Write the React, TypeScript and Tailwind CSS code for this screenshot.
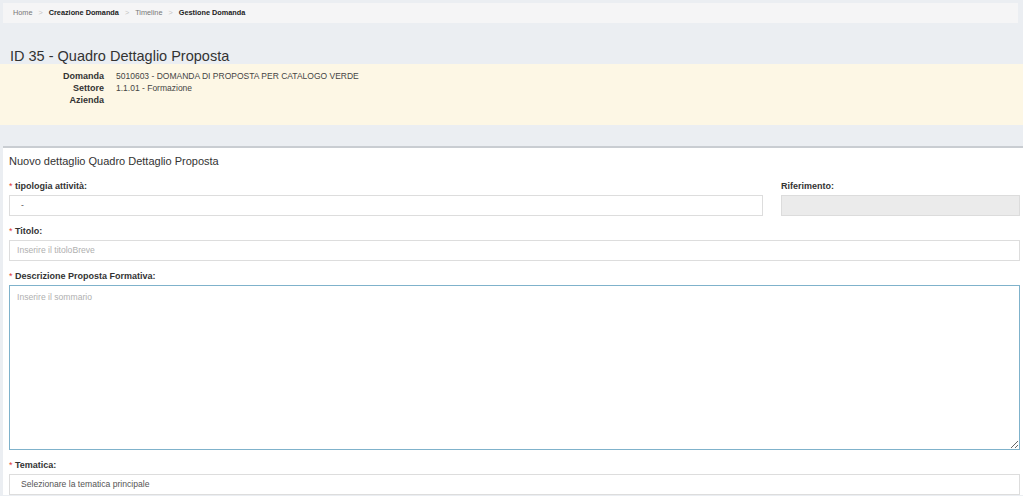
import React from "react";

type FieldProps = {
  label: string;
  required?: boolean;
  children: React.ReactNode;
};

function Field({ label, required, children }: FieldProps) {
  return (
    <div className="mb-[9px]">
      <div className="mb-[3px] text-[9px] font-bold leading-[12px] text-[#333]">
        {required && <span className="text-[#e03a3a] font-normal">* </span>}
        {label}
      </div>
      {children}
    </div>
  );
}

const crumbs = [
  { text: "Home", bold: false },
  { text: "Creazione Domanda", bold: true },
  { text: "Timeline", bold: false },
  { text: "Gestione Domanda", bold: true },
];

export default function App() {
  return (
    <div className="h-screen overflow-hidden bg-[#ebeef2] font-['Liberation_Sans',Arial,sans-serif] text-[#333]">
      <div className="px-[3px] pt-[3px] pr-[5px]">
        <div className="flex h-[20px] items-center bg-[#f5f5f6] pl-[10px] text-[7.3px]">
          {crumbs.map((c, i) => (
            <React.Fragment key={c.text}>
              {i > 0 && <span className="px-[6px] text-[#c4c4c4]">&gt;</span>}
              <span className={c.bold ? "font-bold text-[#222]" : "text-[#777]"}>
                {c.text}
              </span>
            </React.Fragment>
          ))}
        </div>
      </div>

      <h1 className="mt-[25px] h-[16px] pl-[10px] text-[14.5px] leading-[16px] text-[#333]">
        ID 35 - Quadro Dettaglio Proposta
      </h1>

      <div className="h-[61px] bg-[#fdf7e5] pt-[6px]">
        <div className="grid grid-cols-[104px_auto] gap-x-[12px] leading-[12px]">
          <span className="text-right text-[9px] font-bold">Domanda</span>
          <span className="text-[8.5px] text-[#444]">
            5010603 - DOMANDA DI PROPOSTA PER CATALOGO VERDE
          </span>
          <span className="text-right text-[9px] font-bold">Settore</span>
          <span className="text-[8.5px] text-[#444]">1.1.01 - Formazione</span>
          <span className="text-right text-[9px] font-bold">Azienda</span>
          <span className="text-[8.5px] text-[#444]"></span>
        </div>
      </div>

      <div className="h-[21px]" />

      <div className="ml-[3px] border-t-2 border-[#c9cdd2] bg-white pl-[6px] pr-[3px]">
        <div className="pt-[6px] mb-[12px] text-[11px] leading-[14px] text-[#333]">
          Nuovo dettaglio Quadro Dettaglio Proposta
        </div>

        <div className="grid grid-cols-[1fr_239px] gap-x-[18px]">
          <Field label="tipologia attività:" required>
            <div className="flex h-[21px] items-center border border-[#ddd] bg-white pl-[11px] text-[8.5px] text-[#555]">
              -
            </div>
          </Field>
          <Field label="Riferimento:">
            <div className="h-[21px] border border-[#dcdcdc] bg-[#ebebeb]" />
          </Field>
        </div>

        <Field label="Titolo:" required>
          <div className="flex h-[21px] items-center border border-[#ddd] bg-white pl-[7px] text-[8.6px] text-[#b0b0b0]">
            Inserire il titoloBreve
          </div>
        </Field>

        <Field label="Descrizione Proposta Formativa:" required>
          <textarea
            readOnly
            placeholder="Inserire il sommario"
            className="block h-[165px] w-full border border-[#7fb2cb] bg-white px-[7px] pt-[5px] text-[8.6px] leading-[12px] outline-none placeholder:text-[#b0b0b0]"
          />
        </Field>

        <Field label="Tematica:" required>
          <div className="flex h-[21px] items-center border border-[#ddd] bg-white pl-[11px] text-[8.6px] text-[#555]">
            Selezionare la tematica principale
          </div>
        </Field>
      </div>
    </div>
  );
}
